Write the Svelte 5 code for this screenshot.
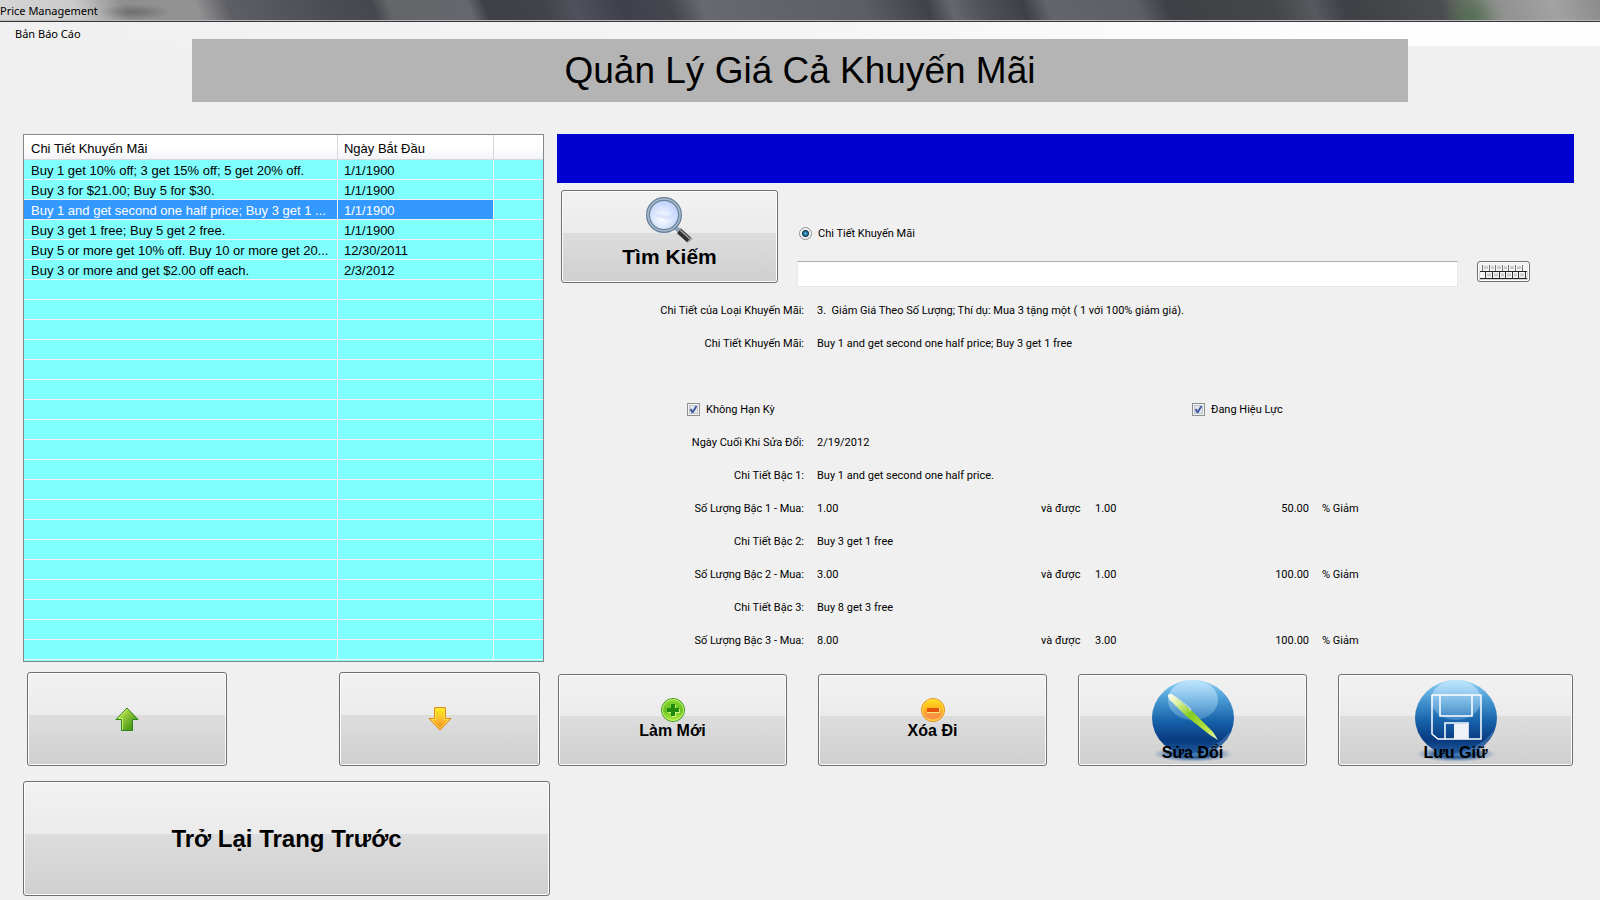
<script lang="ts">
    type Promotion = { name: string; start: string };
    type Tier = { level: number; name: string; buy: string; get: string; percent: string };

    const promotions: Promotion[] = [
        { name: 'Buy 1 get 10% off; 3 get 15% off; 5 get 20% off.', start: '1/1/1900' },
        { name: 'Buy 3 for $21.00; Buy 5 for $30.', start: '1/1/1900' },
        { name: 'Buy 1 and get second one half price; Buy 3 get 1 ...', start: '1/1/1900' },
        { name: 'Buy 3 get 1 free; Buy 5 get 2 free.', start: '1/1/1900' },
        { name: 'Buy 5 or more get 10% off. Buy 10 or more get 20...', start: '12/30/2011' },
        { name: 'Buy 3 or more and get $2.00 off each.', start: '2/3/2012' }
    ];

    const tiers: Tier[] = [
        { level: 1, name: 'Buy 1 and get second one half price.', buy: '1.00', get: '1.00', percent: '50.00' },
        { level: 2, name: 'Buy 3 get 1 free', buy: '3.00', get: '1.00', percent: '100.00' },
        { level: 3, name: 'Buy 8 get 3 free', buy: '8.00', get: '3.00', percent: '100.00' }
    ];

    // the list always shows 25 lines, filled or not
    const blanks = Array(25 - promotions.length).fill(null);

    let selected = $state(2);
    let query = $state('');
    let noExpiry = $state(true);
    let active = $state(true);

    function move(step: number) {
        selected = Math.min(promotions.length - 1, Math.max(0, selected + step));
    }
</script>

{#snippet orb(id: string)}
    <defs>
        <linearGradient id="{id}-ball" x1="0" y1="0" x2="0" y2="1">
            <stop offset="0" stop-color="#8fd0f5" />
            <stop offset="0.25" stop-color="#4a9bd4" />
            <stop offset="0.55" stop-color="#1560a8" />
            <stop offset="0.8" stop-color="#083a80" />
            <stop offset="1" stop-color="#2a64a4" />
        </linearGradient>
        <linearGradient id="{id}-shine" x1="0" y1="0" x2="0" y2="1">
            <stop offset="0" stop-color="#c4e8ff" stop-opacity="0.9" />
            <stop offset="1" stop-color="#7db8e4" stop-opacity="0.35" />
        </linearGradient>
        <radialGradient id="{id}-glow">
            <stop offset="0.5" stop-color="#1a4f8f" stop-opacity="0.9" />
            <stop offset="1" stop-color="#5a86b8" stop-opacity="0" />
        </radialGradient>
    </defs>
    <ellipse cx="42" cy="76" rx="40" ry="8" fill="url(#{id}-glow)" />
    <ellipse cx="42" cy="40" rx="41" ry="38" fill="url(#{id}-ball)" />
    <path d="M32 77C54 74 70 66 80 52C75 68 59 78 42 78Z" fill="#6a9ad0" opacity="0.4" />
    <ellipse cx="42" cy="22" rx="25" ry="20" fill="url(#{id}-shine)" />
{/snippet}

<div class="window">
    <header class="titlebar">Price Management</header>
    <nav class="menu"><button class="menu-item">Bản Báo Cáo</button></nav>
    <h1>Quản Lý Giá Cả Khuyến Mãi</h1>

    <main>
        <section class="left">
            <div class="list">
                <table>
                    <thead>
                        <tr>
                            <th class="name">Chi Tiết Khuyến Mãi</th>
                            <th class="start">Ngày Bắt Đầu</th>
                            <th></th>
                        </tr>
                    </thead>
                    <tbody>
                        {#each promotions as promo, i}
                            <tr class:selected={i === selected} onclick={() => (selected = i)}>
                                <td>{promo.name}</td>
                                <td>{promo.start}</td>
                                <td></td>
                            </tr>
                        {/each}
                        {#each blanks as _}
                            <tr><td></td><td></td><td></td></tr>
                        {/each}
                    </tbody>
                </table>
            </div>

            <div class="arrows">
                <button class="btn" aria-label="Up" onclick={() => move(-1)}>
                    <svg width="24" height="24" viewBox="0 0 24 24">
                        <defs>
                            <linearGradient id="up" x1="0" y1="0" x2="1" y2="1">
                                <stop offset="0.2" stop-color="#b5e04a" />
                                <stop offset="0.9" stop-color="#3a8c10" />
                            </linearGradient>
                        </defs>
                        <path d="M12 1L23 12.500H17.500V23.500H6.500V12.500H1Z" fill="url(#up)" stroke="#2c8418" />
                        <path d="M12 2.500L3.500 11.500H7.500V22.500" fill="none" stroke="#c6ef6c" />
                    </svg>
                </button>
                <button class="btn" aria-label="Down" onclick={() => move(1)}>
                    <svg width="24" height="24" viewBox="0 0 24 24">
                        <defs>
                            <linearGradient id="down" x1="0" y1="0" x2="0" y2="1">
                                <stop offset="0" stop-color="#fff01c" />
                                <stop offset="0.6" stop-color="#ffb52e" />
                                <stop offset="1" stop-color="#f5802c" />
                            </linearGradient>
                        </defs>
                        <path d="M6.500 0.500H17.500V11.500H23L12 23L1 11.500H6.500Z" fill="url(#down)" stroke="#e58a14" />
                        <path d="M7.500 12.500V1.500H16.500V12.500H20.500L12 21.500L3.500 12.500Z" fill="none" stroke="#ffe04a" />
                    </svg>
                </button>
            </div>

            <button class="btn back">Trở Lại Trang Trước</button>
        </section>

        <section class="right">
            <div class="banner"></div>

            <div class="search">
                <button class="btn find">
                    <svg width="48" height="48" viewBox="0 0 48 48">
                        <defs>
                            <radialGradient id="lens" cx="0.45" cy="0.6">
                                <stop offset="0" stop-color="#ffffff" />
                                <stop offset="1" stop-color="#c3d5fb" />
                            </radialGradient>
                        </defs>
                        <path d="M30 33L42 46L47 42L34 30Z" fill="#000" opacity="0.2" />
                        <path d="M28 29L33 34" stroke="#8ea3b3" stroke-width="4" />
                        <path d="M33 34L43 43" stroke="#303030" stroke-width="6" />
                        <path d="M34 33L44 42" stroke="#a5a5a5" stroke-width="1.500" />
                        <circle cx="18" cy="18" r="16" fill="url(#lens)" stroke="#67819b" stroke-width="4" />
                        <circle cx="18" cy="18" r="16" fill="none" stroke="#a9bdcd" stroke-width="1.500" />
                        <path d="M9 19C16 12 20 24 28 16C25 28 13 20 9 19Z" fill="#bccff8" opacity="0.4" />
                    </svg>
                    <span>Tìm Kiếm</span>
                </button>
                <div class="criteria">
                    <label class="choice">
                        <input type="radio" name="criteria" checked />
                        Chi Tiết Khuyến Mãi
                    </label>
                    <div class="query">
                        <input type="text" aria-label="Chi Tiết Khuyến Mãi" bind:value={query} />
                        <button class="btn keyboard" aria-label="Keyboard">
                            <svg width="49" height="17" viewBox="0 0 49 17">
                                <path d="M1 1H48V16H1Z" fill="#f4f4f4" />
                                <path d="M1 8.500H48M1 15.500H48" stroke="#222" />
                                <path d="M3.500 2V8M10.500 2V8M16.500 2V8M23.500 2V8M29.500 2V8M36.500 2V8M43.500 2V8" stroke="#777" />
                                <path d="M6.500 9V16M13.500 9V16M20.500 9V16M26.500 9V16M33.500 9V16M39.500 9V16M46.500 9V16" stroke="#333" />
                                <path d="M5 4.500H9M12 4.500H15M18 4.500H22M25 4.500H28M31 4.500H35M38 4.500H42M8 12H12M15 12H19M22 12H25M28 12H32M35 12H38M41 12H45" stroke="#ccc" stroke-width="3" />
                            </svg>
                        </button>
                    </div>
                </div>
            </div>

            <div class="details">
                <span class="label">Chi Tiết của Loại Khuyến Mãi:</span>
                <span class="wide">3.&nbsp; Giảm Giá Theo Số Lượng; Thí dụ: Mua 3 tặng một ( 1 với 100% giảm giá).</span>

                <span class="label">Chi Tiết Khuyến Mãi:</span>
                <span class="wide">Buy 1 and get second one half price; Buy 3 get 1 free</span>

                <span class="spacer"></span>

                <label class="choice expiry">
                    <input type="checkbox" bind:checked={noExpiry} />
                    Không Hạn Kỳ
                </label>
                <label class="choice active">
                    <input type="checkbox" bind:checked={active} />
                    Đang Hiệu Lực
                </label>

                <span class="label">Ngày Cuối Khi Sửa Đổi:</span>
                <span class="wide">2/19/2012</span>

                {#each tiers as tier}
                    <span class="label">Chi Tiết Bậc {tier.level}:</span>
                    <span class="wide">{tier.name}</span>

                    <span class="label">Số Lượng Bậc {tier.level} - Mua:</span>
                    <span>{tier.buy}</span>
                    <span>và được</span>
                    <span>{tier.get}</span>
                    <span class="percent">{tier.percent}</span>
                    <span>% Giảm</span>
                {/each}
            </div>

            <div class="actions">
                <button class="btn">
                    <svg width="24" height="24" viewBox="0 0 24 24">
                        <defs>
                            <linearGradient id="add" x1="0" y1="0" x2="0" y2="1">
                                <stop offset="0" stop-color="#8edb32" />
                                <stop offset="0.5" stop-color="#68c020" />
                                <stop offset="1" stop-color="#b5ee3c" />
                            </linearGradient>
                        </defs>
                        <circle cx="12" cy="12" r="11.500" fill="url(#add)" stroke="#399a1c" />
                        <circle cx="12" cy="12" r="10.500" fill="none" stroke="#c4f07c" />
                        <path d="M11 7H15V11H19V15H15V19H11V15H7V11H11Z" fill="#d4f580" />
                        <path d="M10 6H14V10H18V14H14V18H10V14H6V10H10Z" fill="#218a0c" />
                    </svg>
                    <span>Làm Mới</span>
                </button>
                <button class="btn">
                    <svg width="24" height="24" viewBox="0 0 24 24">
                        <defs>
                            <linearGradient id="remove" x1="0" y1="0" x2="0" y2="1">
                                <stop offset="0" stop-color="#ffe21a" />
                                <stop offset="0.5" stop-color="#ffb020" />
                                <stop offset="0.8" stop-color="#fb8a4c" />
                                <stop offset="1" stop-color="#ffc02c" />
                            </linearGradient>
                        </defs>
                        <circle cx="12" cy="12" r="11.500" fill="url(#remove)" stroke="#e88f18" />
                        <circle cx="12" cy="12" r="10.500" fill="none" stroke="#ffdc50" />
                        <path d="M6 10H19V15H6Z" fill="#ffe08a" />
                        <path d="M6 10H18V14H6Z" fill="#e8540c" />
                    </svg>
                    <span>Xóa Đi</span>
                </button>
                <button class="btn large">
                    <svg width="84" height="84" viewBox="0 0 84 84">
                        {@render orb('edit')}
                        <defs>
                            <linearGradient id="pen" x1="0" y1="0" x2="1" y2="1">
                                <stop offset="0" stop-color="#ffffff" />
                                <stop offset="0.2" stop-color="#dcf0a0" />
                                <stop offset="0.45" stop-color="#86cc1e" />
                                <stop offset="0.8" stop-color="#c0e848" />
                                <stop offset="1" stop-color="#f0f8d8" />
                            </linearGradient>
                        </defs>
                        <path d="M17 18Q17 15 21 16L40 32L62 54L67 62L59 57L35 38L18 21Z" fill="url(#pen)" />
                        <path d="M24 18L40 31L38 33" fill="none" stroke="#d6e6e0" />
                    </svg>
                    <span>Sửa Đổi</span>
                </button>
                <button class="btn large">
                    <svg width="84" height="84" viewBox="0 0 84 84">
                        {@render orb('save')}
                        <g fill="none" stroke="#fff" stroke-width="1.500">
                            <path d="M18 17H67V61H24L18 56Z" />
                            <path d="M26 17V38H58V17" />
                            <path d="M31 61V45H54V61" />
                        </g>
                        <path d="M40 46H54V61H40Z" fill="#eef2f8" />
                    </svg>
                    <span>Lưu Giữ</span>
                </button>
            </div>
        </section>
    </main>
</div>

<style>
:global(body) {
    margin: 0;
    background: #f0f0f0;
}

.window {
    font: 11px/15px Roboto, "Liberation Sans", sans-serif;
    color: #000;
}

.titlebar {
    height: 20px;
    border-bottom: 1px solid #b9b9bd;
    box-shadow: 0 1px 0 #34343a;
    font: 11px/22px "Noto Sans", "Open Sans", sans-serif;
    background:
        radial-gradient(ellipse 36px 8px at 134px 12px, rgba(60, 60, 60, 0.4), transparent),
        radial-gradient(ellipse 30px 30px at 92% 18px, rgba(74, 112, 68, 0.7), transparent),
        linear-gradient(70deg, #d6d6d6 0, #cacaca 5%, #8f8f90 8%, #929293 12.5%,
            #5e5f64 14.5%, #4b4c52 21%, #47484e 23.5%, #646568 24.5%, #66676d 29.5%,
            #3f4047 30.5%, #42434a 34%, #50515a 36%, #3f404a 39%, #45464e 42%, #68696e 44%,
            #5d5e63 54%, #414248 58%, #66676d 59.5%, #505156 61.5%, #3f4045 64%, #64656a 65.5%,
            #5e5f64 71%, #3f4045 73%, #45464a 79.5%, #58595e 82%, #3f4045 84%, #4c4d50 90%,
            #8c8e8c 93%, #a2a2a2 97%, #8c8c8c 100%);
}

.menu {
    height: 24px;
    margin-top: 1px;
    padding-left: 15px;
    background: linear-gradient(90deg, #f0f0f0, #f4f4f4 45%, #fdfdfd 85%);
}

.menu-item {
    padding: 0;
    border: none;
    background: none;
    color: inherit;
    font: 11px/24px "Noto Sans", "Open Sans", sans-serif;
}

h1 {
    margin: -7px 12% 0;
    background: #b4b4b4;
    font: 37px/63px "Liberation Sans", Arial, sans-serif;
    text-align: center;
}

main {
    display: grid;
    grid-template-columns: 527fr 1017fr;
    gap: 7px;
    padding: 32px 26px 0 23px;
}

.list {
    margin-right: 6px;
    padding-bottom: 1px;
    border: 1px solid #828790;
    background: #80ffff;
}

table {
    width: 100%;
    table-layout: fixed;
    border-spacing: 0;
    font: 13px/17px "Liberation Sans", Arial, sans-serif;
}

th, td {
    box-sizing: border-box;
    height: 20px;
    padding: 2px 2px 0 6px;
    border-right: 1px solid #f0f0f0;
    border-bottom: 1px solid #f0f0f0;
    text-align: left;
    white-space: nowrap;
    overflow: hidden;
}

th {
    height: 25px;
    border-color: #d9d9dc;
    background: linear-gradient(#fff 45%, #f3f4f6);
    font-weight: normal;
}

th:first-child, td:first-child {
    padding-left: 7px;
}

th:last-child, td:last-child {
    border-right: none;
}

.name {
    width: 60.5%;
}

.start {
    width: 30%;
}

.selected td:not(:last-child) {
    background: #3399ff;
    background-clip: padding-box;
    color: #fff;
}

.btn {
    display: flex;
    flex-direction: column;
    align-items: center;
    justify-content: center;
    padding: 0;
    border: 1px solid #707070;
    border-radius: 3px;
    box-shadow: inset 0 0 0 1px #fcfcfc;
    background: linear-gradient(#f2f2f2, #ebebeb 46%, #dddddd 46%, #cfcfcf);
    color: #000;
    font: bold 16px/18px "Liberation Sans", Arial, sans-serif;
}

.arrows {
    display: grid;
    grid-template-columns: 200fr 201fr;
    gap: 112px;
    margin: 10px 10px 15px 4px;
}

.arrows .btn {
    height: 94px;
}

.back {
    width: 100%;
    height: 115px;
    font-size: 24px;
}

.right {
    display: flex;
    flex-direction: column;
    gap: 7px;
}

.banner {
    height: 49px;
    background: #0000d0;
}

.search {
    display: grid;
    grid-template-columns: 217fr 733fr;
    gap: 19px;
    align-items: start;
    padding: 0 44px 0 4px;
}

.find {
    height: 93px;
    padding-bottom: 8px;
    font-size: 21px;
    line-height: 24px;
}

.criteria {
    display: flex;
    flex-direction: column;
    justify-content: flex-end;
    gap: 20px;
    height: 97px;
}

.choice {
    display: flex;
    align-items: center;
    gap: 6px;
}

.criteria .choice {
    padding-left: 2px;
}

.choice input {
    appearance: none;
    flex: none;
    width: 13px;
    height: 13px;
    margin: 0;
    border: 1px solid #8e8f8f;
    background: #f4f4f4;
}

.choice input[type="radio"] {
    border-radius: 50%;
}

.choice input[type="radio"]:checked {
    background: radial-gradient(circle, #5cc8f0 0, #1b6a96 2px, #17384f 3px, #e8eaec 4px, #f4f4f4 5px);
}

.choice input[type="checkbox"] {
    box-shadow: inset 0 0 0 1px #f4f4f4, inset 0 0 0 2px #c2c6cc;
}

.choice input[type="checkbox"]:checked {
    background: #e4e8ec url("data:image/svg+xml,%3Csvg xmlns='http://www.w3.org/2000/svg' viewBox='0 0 11 11'%3E%3Cpath d='M2.500 5L4.500 8.500L8.500 2' fill='none' stroke='%23435ca0' stroke-width='2'/%3E%3C/svg%3E");
}

.query {
    display: flex;
    align-items: flex-start;
    gap: 19px;
}

.query input {
    box-sizing: border-box;
    flex: 1;
    height: 26px;
    padding: 0 4px;
    border: 1px solid #e3e9ef;
    border-top-color: #abadb3;
    background: #fff;
    font-size: 13px;
}

.keyboard {
    width: 53px;
    height: 21px;
}

.details {
    display: grid;
    grid-template-columns: 247fr 211fr 41fr 84fr 117fr 252fr;
    grid-auto-rows: 33px;
    column-gap: 13px;
    align-items: center;
    white-space: nowrap;
}

.label, .percent {
    text-align: right;
}

.wide {
    grid-column: 2 / -1;
}

.spacer {
    grid-column: 1 / -1;
}

.expiry {
    grid-column: 1 / 5;
    padding-left: 130px;
}

.active {
    grid-column: 5 / -1;
}

.actions {
    display: grid;
    grid-template-columns: 229fr 229fr 229fr 235fr;
    gap: 31px;
    margin-top: 10px;
    padding: 0 1px;
}

.actions .btn {
    height: 92px;
    padding-bottom: 2px;
}

/* the caption of a large icon is printed over its lower edge */
.actions .large {
    display: grid;
    place-items: start center;
    padding: 3px 0;
}

.large svg, .large span {
    grid-area: 1 / 1;
}

.large span {
    align-self: end;
}
</style>
